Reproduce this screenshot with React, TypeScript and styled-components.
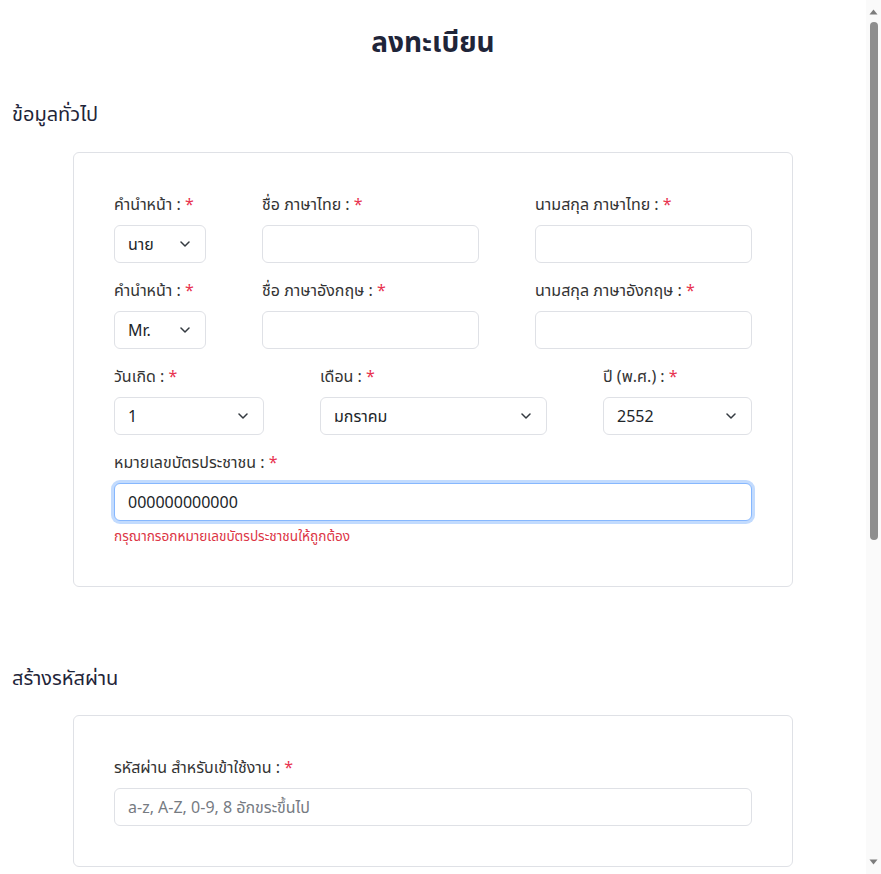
import React, { useEffect, useRef } from "react";
import styled, { createGlobalStyle } from "styled-components";

const GlobalStyle = createGlobalStyle`
  html, body { margin: 0; padding: 0; background: #ffffff; overflow: hidden; }
  body { font-family: "Noto Sans", "Noto Sans Thai", sans-serif; color: #333333; }
  * { box-sizing: border-box; }
`;

const Shell = styled.div`
  display: flex;
  height: 100vh;
`;

const Content = styled.div`
  flex: 1;
  min-width: 0;
  overflow: hidden;
`;

const ScrollRail = styled.div`
  width: 15px;
  flex: 0 0 15px;
  background: #fafafa;
  display: flex;
  flex-direction: column;
  align-items: center;
  padding: 9px 0 9px;
`;

const RailArrow = styled.svg`
  display: block;
  flex: 0 0 auto;
`;

const Thumb = styled.div`
  width: 8px;
  height: 518px;
  margin-top: 7px;
  border-radius: 4px;
  background: #8f8f8f;
`;

const RailSpacer = styled.div`
  flex: 1;
`;

const Page = styled.main`
  padding: 21px 12px 554px;
`;

const Title = styled.h1`
  margin: 0;
  text-align: center;
  font-size: 28px;
  line-height: 40px;
  font-weight: 700;
  color: #1f2539;
`;

const SectionTitle = styled.h2<{ $top: number; $bottom: number }>`
  margin: ${(p) => p.$top}px 0 ${(p) => p.$bottom}px;
  font-size: 20px;
  line-height: 30px;
  font-weight: 400;
  color: #1f2539;
`;

const Card = styled.section`
  width: 720px;
  margin: 0 auto;
  border: 1px solid #dfe1e6;
  border-radius: 6px;
  padding: 39px 40px 40px;
  display: flex;
  flex-direction: column;
  gap: 15px;
`;

const Row = styled.div<{ $cols: string }>`
  display: grid;
  grid-template-columns: ${(p) => p.$cols};
  column-gap: 56px;
`;

const Field = styled.div`
  display: flex;
  flex-direction: column;
`;

const Label = styled.label`
  font-size: 16px;
  line-height: 24px;
  margin-bottom: 9px;
  color: #333333;
`;

const Req = styled.span`
  color: #e8334f;
`;

const TextInput = styled.input<{ $invalidFocus?: boolean }>`
  height: 38px;
  width: 100%;
  border: 1px solid ${(p) => (p.$invalidFocus ? "#86b7fe" : "#dfe1e6")};
  border-radius: 6px;
  padding: 0 13px;
  font-family: inherit;
  font-size: 16px;
  color: #212529;
  background: #fff;
  outline: none;
  box-shadow: ${(p) => (p.$invalidFocus ? "0 0 0 3px rgba(13,110,253,0.25)" : "none")};
  &::placeholder { color: #767b82; }
`;

const SelectWrap = styled.div`
  position: relative;
  width: 100%;
`;

const Select = styled.select`
  appearance: none;
  -webkit-appearance: none;
  height: 38px;
  width: 100%;
  border: 1px solid #dfe1e6;
  border-radius: 6px;
  padding: 0 32px 0 13px;
  font-family: inherit;
  font-size: 16px;
  color: #212529;
  background: #fff;
  outline: none;
`;

const Chevron = styled.svg`
  position: absolute;
  right: 16px;
  top: 50%;
  margin-top: -3px;
  pointer-events: none;
`;

const ErrorText = styled.div`
  margin-top: 5px;
  font-size: 13.6px;
  line-height: 20px;
  color: #dc3545;
`;

function Dropdown({ value, options }: { value: string; options: string[] }) {
  return (
    <SelectWrap>
      <Select defaultValue={value}>
        {options.map((o) => (
          <option key={o} value={o}>
            {o}
          </option>
        ))}
      </Select>
      <Chevron width="10" height="6" viewBox="0 0 10 6" fill="none">
        <path d="M1 1L5 5L9 1" stroke="#343a40" strokeWidth="1.5" strokeLinecap="round" strokeLinejoin="round" />
      </Chevron>
    </SelectWrap>
  );
}

function LabelText({ text }: { text: string }) {
  return (
    <Label>
      {text} : <Req>*</Req>
    </Label>
  );
}

function Scrollbar() {
  return (
    <ScrollRail aria-hidden="true">
      <RailArrow width="9" height="6" viewBox="0 0 9 6">
        <path d="M4.5 0.5L8.5 5.5H0.5Z" fill="#7c7c7c" />
      </RailArrow>
      <Thumb />
      <RailSpacer />
      <RailArrow width="9" height="6" viewBox="0 0 9 6">
        <path d="M0.5 0.5H8.5L4.5 5.5Z" fill="#7c7c7c" />
      </RailArrow>
    </ScrollRail>
  );
}

const months = [
  "มกราคม", "กุมภาพันธ์", "มีนาคม", "เมษายน", "พฤษภาคม", "มิถุนายน",
  "กรกฎาคม", "สิงหาคม", "กันยายน", "ตุลาคม", "พฤศจิกายน", "ธันวาคม",
];

export default function App() {
  const idRef = useRef<HTMLInputElement>(null);
  useEffect(() => {
    const el = idRef.current;
    if (el) {
      el.focus({ preventScroll: true });
      el.setSelectionRange(el.value.length, el.value.length);
    }
  }, []);

  const days = Array.from({ length: 31 }, (_, i) => String(i + 1));
  const years = Array.from({ length: 60 }, (_, i) => String(2567 - i));

  return (
    <>
      <GlobalStyle />
      <Shell>
        <Content>
          <Page>
            <Title>ลงทะเบียน</Title>

            <SectionTitle $top={38} $bottom={23}>ข้อมูลทั่วไป</SectionTitle>
            <Card>
              <Row $cols="92px 217px 217px">
                <Field>
                  <LabelText text="คำนำหน้า" />
                  <Dropdown value="นาย" options={["นาย", "นาง", "นางสาว"]} />
                </Field>
                <Field>
                  <LabelText text="ชื่อ ภาษาไทย" />
                  <TextInput type="text" />
                </Field>
                <Field>
                  <LabelText text="นามสกุล ภาษาไทย" />
                  <TextInput type="text" />
                </Field>
              </Row>
              <Row $cols="92px 217px 217px">
                <Field>
                  <LabelText text="คำนำหน้า" />
                  <Dropdown value="Mr." options={["Mr.", "Mrs.", "Miss"]} />
                </Field>
                <Field>
                  <LabelText text="ชื่อ ภาษาอังกฤษ" />
                  <TextInput type="text" />
                </Field>
                <Field>
                  <LabelText text="นามสกุล ภาษาอังกฤษ" />
                  <TextInput type="text" />
                </Field>
              </Row>
              <Row $cols="150px 227px 149px">
                <Field>
                  <LabelText text="วันเกิด" />
                  <Dropdown value="1" options={days} />
                </Field>
                <Field>
                  <LabelText text="เดือน" />
                  <Dropdown value="มกราคม" options={months} />
                </Field>
                <Field>
                  <LabelText text="ปี (พ.ศ.)" />
                  <Dropdown value="2552" options={years} />
                </Field>
              </Row>
              <Field>
                <LabelText text="หมายเลขบัตรประชาชน" />
                <TextInput ref={idRef} type="text" defaultValue="000000000000" $invalidFocus />
                <ErrorText>กรุณากรอกหมายเลขบัตรประชาชนให้ถูกต้อง</ErrorText>
              </Field>
            </Card>

            <SectionTitle $top={76} $bottom={22}>สร้างรหัสผ่าน</SectionTitle>
            <Card>
              <Field>
                <LabelText text="รหัสผ่าน สำหรับเข้าใช้งาน" />
                <TextInput type="password" placeholder="a-z, A-Z, 0-9, 8 อักขระขึ้นไป" />
              </Field>
            </Card>
          </Page>
        </Content>
        <Scrollbar />
      </Shell>
    </>
  );
}
